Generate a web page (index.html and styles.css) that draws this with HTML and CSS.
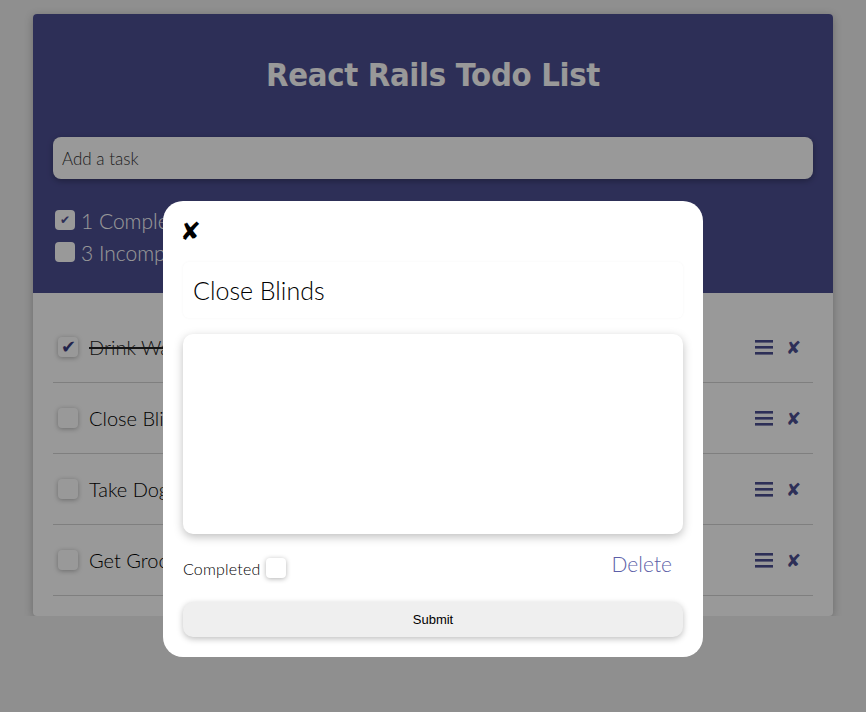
FILE: index.html
```html
<!DOCTYPE html>
<html>
<head>
<meta charset="utf-8">
<link rel="stylesheet" href="styles.css">
</head>
<body>
<div class="card">
  <header class="head">
    <h1 class="title">React Rails Todo List</h1>
    <input class="add" type="text" placeholder="Add a task">
    <div class="filters">
      <label class="filter"><span class="box checked small">&#10004;</span>1 Completed</label>
      <label class="filter"><span class="box"></span>3 Incomplete</label>
    </div>
  </header>
  <ul class="list">
    <li class="row"><span class="box rowbox checked">&#10004;</span><span class="name done">Drink Water</span><span class="acts"><svg class="menu" width="18" height="15" viewBox="0 0 18 15"><rect x="0" y="0" width="18" height="2.6"/><rect x="0" y="6" width="18" height="2.6"/><rect x="0" y="12" width="18" height="2.6"/></svg><span class="del">&#10008;</span></span></li>
    <li class="row"><span class="box rowbox"></span><span class="name">Close Blinds</span><span class="acts"><svg class="menu" width="18" height="15" viewBox="0 0 18 15"><rect x="0" y="0" width="18" height="2.6"/><rect x="0" y="6" width="18" height="2.6"/><rect x="0" y="12" width="18" height="2.6"/></svg><span class="del">&#10008;</span></span></li>
    <li class="row"><span class="box rowbox"></span><span class="name">Take Dog Out</span><span class="acts"><svg class="menu" width="18" height="15" viewBox="0 0 18 15"><rect x="0" y="0" width="18" height="2.6"/><rect x="0" y="6" width="18" height="2.6"/><rect x="0" y="12" width="18" height="2.6"/></svg><span class="del">&#10008;</span></span></li>
    <li class="row"><span class="box rowbox"></span><span class="name">Get Groceries</span><span class="acts"><svg class="menu" width="18" height="15" viewBox="0 0 18 15"><rect x="0" y="0" width="18" height="2.6"/><rect x="0" y="6" width="18" height="2.6"/><rect x="0" y="12" width="18" height="2.6"/></svg><span class="del">&#10008;</span></span></li>
  </ul>
</div>
<div class="overlay"></div>
<div class="modal">
  <div class="close">&#10008;</div>
  <input class="mtitle" type="text" value="Close Blinds">
  <textarea class="notes"></textarea>
  <div class="mrow">
    <label class="comp">Completed<span class="box mbox"></span></label>
    <span class="delete">Delete</span>
  </div>
  <button class="submit">Submit</button>
</div>
</body>
</html>
```
FILE: styles.css
```css
* { box-sizing: border-box; }
body {
  margin: 0;
  background: #eeeeee;
  font-family: Lato, "Noto Sans", sans-serif;
  font-weight: 300;
  color: #000;
}
.card {
  width: 800px;
  margin: 14px auto 0;
  background: #fff;
  border-radius: 4px;
  box-shadow: 0 2px 8px rgba(0,0,0,0.25);
  overflow: hidden;
}
.head {
  background: #4c4f92;
  padding: 40px 20px 25px;
  display: flex;
  flex-direction: column;
}
.title {
  margin: 0;
  text-align: center;
  font-family: "DejaVu Sans Condensed", "DejaVu Sans", sans-serif;
  font-weight: bold;
  font-size: 32.5px;
  line-height: 42px;
  color: #fff;
  letter-spacing: -0.3px;
}
.add {
  margin-top: 41px;
  height: 42px;
  border: none;
  border-radius: 8px;
  background: #fff;
  padding: 0 9px;
  font-family: Lato, sans-serif;
  font-weight: 300;
  font-size: 17px;
  box-shadow: 0 2px 6px rgba(0,0,0,0.3);
  outline: none;
}
.add::placeholder { color: #333; }
.filters {
  margin-top: 25px;
  display: flex;
  flex-direction: column;
}
.filter {
  display: flex;
  align-items: center;
  height: 32px;
  font-size: 21px;
  color: #fff;
  padding-left: 2px;
}
.box {
  width: 20px;
  height: 20px;
  border-radius: 4px;
  background: #fff;
  display: inline-flex;
  align-items: center;
  justify-content: center;
  color: #4c4f92;
  font-family: "DejaVu Sans", sans-serif;
  font-size: 16px;
  line-height: 1;
  flex: none;
}
.filter .box { margin-right: 6px; }
.box.small { font-size: 12px; }
.list {
  list-style: none;
  margin: 0;
  padding: 19px 20px 20px;
}
.row {
  height: 71px;
  border-bottom: 1px solid #d4d4d4;
  display: flex;
  align-items: center;
  padding: 0 12px 0 5px;
}
.rowbox {
  box-shadow: 0 1px 5px rgba(0,0,0,0.3);
  font-size: 18px;
  color: #3a3d80;
}
.name {
  margin-left: 11px;
  font-size: 20px;
  color: #000;
}
.name.done { text-decoration: line-through; color: #222; }
.acts {
  margin-left: auto;
  display: flex;
  align-items: center;
  gap: 13px;
  color: #4c4f92;
  font-family: "DejaVu Sans", sans-serif;
}
.menu { fill: #4c4f92; display: block; }
.del { font-size: 18px; }
.overlay {
  position: fixed;
  inset: 0;
  background: rgba(0,0,0,0.4);
}
.modal {
  position: fixed;
  top: 201px;
  left: 163px;
  width: 540px;
  background: #fff;
  border-radius: 20px;
  padding: 18px 20px 20px;
  display: flex;
  flex-direction: column;
}
.close {
  font-family: "DejaVu Sans", sans-serif;
  font-size: 25px;
  line-height: 26px;
  color: #000;
  margin-left: -3px;
}
.mtitle {
  margin-top: 17px;
  height: 56px;
  border: none;
  border-radius: 6px;
  padding: 0 10px;
  font-family: Lato, sans-serif;
  font-weight: 300;
  font-size: 25px;
  color: #000;
  box-shadow: 0 0 3px rgba(0,0,0,0.04);
  outline: none;
}
.notes {
  margin-top: 16px;
  height: 200px;
  border: none;
  border-radius: 10px;
  resize: none;
  box-shadow: 0 3px 10px rgba(0,0,0,0.25);
  outline: none;
}
.mrow {
  margin-top: 24px;
  display: flex;
  align-items: center;
  justify-content: space-between;
  height: 20px;
}
.comp {
  display: flex;
  align-items: center;
  font-size: 16px;
  letter-spacing: 0.2px;
  color: #000;
}
.mbox {
  margin-left: 5px;
  box-shadow: 0 1px 5px rgba(0,0,0,0.3);
}
.delete {
  font-size: 21px;
  color: #5d5fa8;
  margin-right: 11px;
  margin-top: -10px;
}
.submit {
  margin-top: 24px;
  height: 35px;
  border: none;
  border-radius: 10px;
  background: #efefef;
  font-family: "Liberation Sans", Arial, sans-serif;
  font-size: 13px;
  color: #000;
  box-shadow: 0 2px 6px rgba(0,0,0,0.25);
}
```
